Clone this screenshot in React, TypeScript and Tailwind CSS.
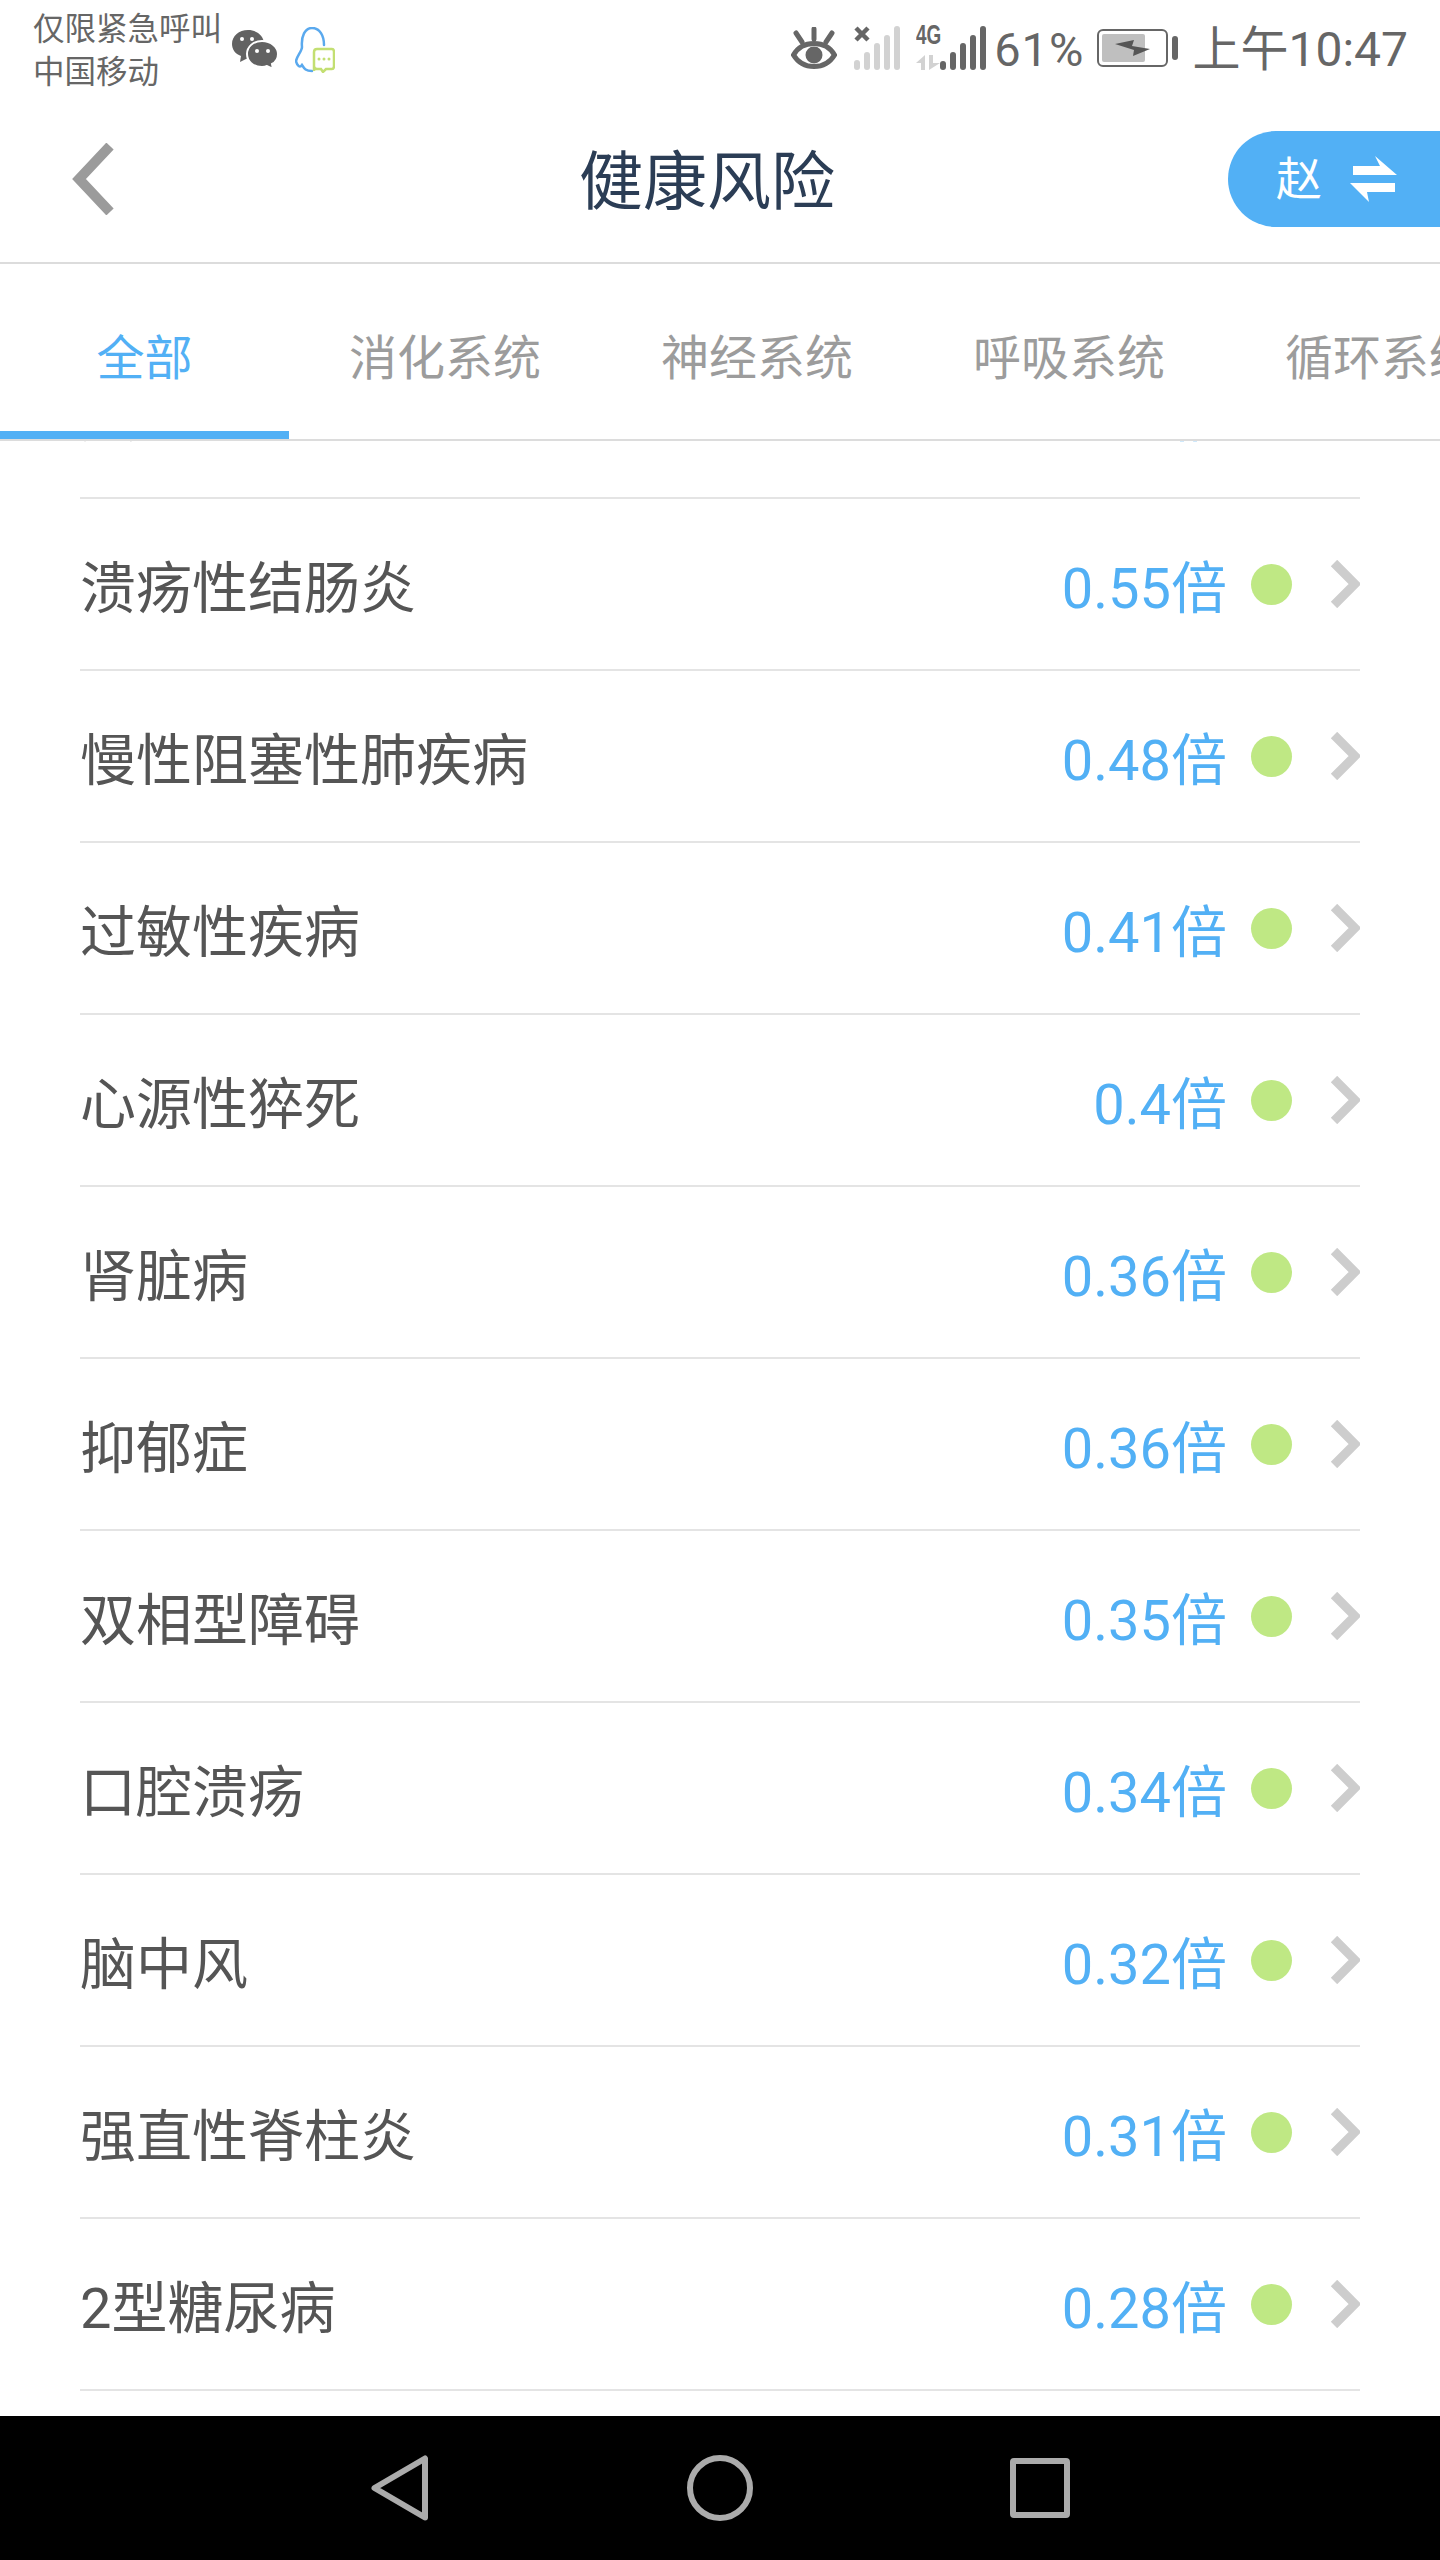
const cjk = "font-['Roboto','Noto_Sans_CJK_SC',sans-serif]";

const risks = [
  { name: '类风湿', value: '0.6倍' },
  { name: '溃疡性结肠炎', value: '0.55倍' },
  { name: '慢性阻塞性肺疾病', value: '0.48倍' },
  { name: '过敏性疾病', value: '0.41倍' },
  { name: '心源性猝死', value: '0.4倍' },
  { name: '肾脏病', value: '0.36倍' },
  { name: '抑郁症', value: '0.36倍' },
  { name: '双相型障碍', value: '0.35倍' },
  { name: '口腔溃疡', value: '0.34倍' },
  { name: '脑中风', value: '0.32倍' },
  { name: '强直性脊柱炎', value: '0.31倍' },
  { name: '2型糖尿病', value: '0.28倍' },
  { name: '帕金森病', value: '0.25倍' },
];

const tabs = ['消化系统', '神经系统', '呼吸系统', '循环系统'];

const StatusIcons = () => (
  <div className="-mt-[4px] flex items-start">
    {/* eye comfort */}
    <svg width="46" height="42" viewBox="0 0 46 42" fill="none" className="mt-[1px] text-[#666666]">
      <path d="M2.5 28C7 20 14 16.5 23 16.5C32 16.5 39 20 43.5 28C39 35.5 32 39.5 23 39.5C14 39.5 7 35.5 2.5 28Z" stroke="currentColor" strokeWidth="5" />
      <circle cx="23" cy="28" r="8.5" fill="currentColor" />
      <path d="M23 2V12M5 6L11 15M41 6L35 15" stroke="currentColor" strokeWidth="5" strokeLinecap="round" />
    </svg>
    {/* sim 1, no service */}
    <svg width="46" height="44" viewBox="0 0 46 44" className="ml-[17px]">
      <path d="M2 2L14 14M14 2L2 14" stroke="#666666" strokeWidth="4.5" />
      <g fill="#d2d2d2">
        <rect x="0" y="34" width="6" height="10" rx="3" />
        <rect x="10" y="26" width="6" height="18" rx="3" />
        <rect x="20" y="17" width="6" height="27" rx="3" />
        <rect x="30" y="9" width="6" height="35" rx="3" />
        <rect x="40" y="0" width="6" height="44" rx="3" />
      </g>
    </svg>
    {/* sim 2, 4G */}
    <div className="relative ml-[16px] h-[44px] w-[70px]">
      <span className="absolute left-0 top-[-6px] origin-left scale-x-[0.7] font-['Liberation_Sans',sans-serif] text-[27px] leading-[31px] font-bold text-[#666666]">4G</span>
      <svg width="70" height="44" viewBox="0 0 70 44" className="absolute inset-0">
        <path d="M0 37L9 29V44H5V37ZM13 29V44L24 37H17V29Z" fill="#d2d2d2" />
        <g fill="#666666">
          <rect x="24" y="35" width="6" height="9" rx="3" />
          <rect x="34" y="26" width="6" height="18" rx="3" />
          <rect x="44" y="17" width="6" height="27" rx="3" />
          <rect x="54" y="9" width="6" height="35" rx="3" />
          <rect x="64" y="0" width="6" height="44" rx="3" />
        </g>
      </svg>
    </div>
  </div>
);

const Battery = () => (
  <svg width="81" height="38" viewBox="0 0 81 38" className="-mt-[4px]">
    <rect x="1" y="1" width="69" height="36" rx="5" fill="none" stroke="#666666" strokeWidth="2" />
    <rect x="5" y="5" width="43" height="28" rx="2" fill="#bfbfbf" />
    <path d="M18 15L37 11L35 17L53 20L36 27L37 21Z" fill="#555555" />
    <rect x="75" y="7" width="6" height="24" rx="3" fill="#666666" />
  </svg>
);

const StatusBar = () => (
  <div className={`flex h-[86px] items-start justify-between pl-[33px] pr-[32px] pt-[8px] text-[#666666] ${cjk}`}>
    <div className="flex items-start">
      <div className="w-[192px] text-[31.5px] leading-[43px]">
        <div>仅限紧急呼叫</div>
        <div>中国移动</div>
      </div>
      {/* wechat */}
      <svg width="46" height="40" viewBox="0 0 46 40" className="ml-[7px] mt-[22px]">
        <path d="M16 0C25 0 32 6 32 14C32 22 25 28 16 28L8 32L9 26C3 24 0 19 0 14C0 6 7 0 16 0Z" fill="#626262" />
        <path d="M30 11C39 11 46 17 46 24C46 28 44 32 40 34L41 39L35 36C33 37 31 37 30 37C21 37 15 31 15 24C15 17 21 11 30 11Z" fill="#626262" stroke="#ffffff" strokeWidth="2" />
        <circle cx="10" cy="9" r="2" fill="#ffffff" />
        <circle cx="20" cy="9" r="2" fill="#ffffff" />
        <circle cx="25" cy="21" r="2" fill="#ffffff" />
        <circle cx="36" cy="21" r="2" fill="#ffffff" />
      </svg>
      {/* qq notification */}
      <svg width="40" height="46" viewBox="0 0 40 46" className="ml-[17px] mt-[19px]" fill="none">
        <path d="M17 44C10 44 9 41 7 38C5 41 2 39 1 34C2 29 7 24 7 20C6 9 10 1 17 1C25 1 29 9 29 18" stroke="#5aa9ee" strokeWidth="2.5" strokeLinecap="round" />
        <path d="M19 44V25C19 23 20 22 22 22H37C38 22 39 23 39 25V39C39 41 38 42 37 42H31L28 45L26 42H22C20 42 19 41 19 39Z" fill="#ffffff" stroke="#c3df72" strokeWidth="2.5" />
        <circle cx="24" cy="32" r="1.5" fill="#c3df72" />
        <circle cx="29" cy="32" r="1.5" fill="#c3df72" />
        <circle cx="34" cy="32" r="1.5" fill="#c3df72" />
      </svg>
    </div>
    <div className="flex items-center pt-[17px]">
      <StatusIcons />
      <span className="ml-[8px] text-[47px] leading-[50px] tracking-[1px]">61%</span>
      <div className="ml-[13px] flex">
        <Battery />
      </div>
      <span className="ml-[14px] text-[48px] leading-[50px] whitespace-nowrap">上午10:47</span>
    </div>
  </div>
);

const Header = () => (
  <div className={`relative flex h-[178px] items-center justify-center border-b-2 border-[#dcdcdc] pr-[26px] pt-[18px] ${cjk}`}>
    <svg width="44" height="72" viewBox="0 0 44 72" className="absolute left-[72px] top-[57px]" fill="none">
      <path d="M38 3L7 36L38 69" stroke="#9b9b9b" strokeWidth="10" />
    </svg>
    <span className="text-[64px] leading-none text-[#2b3d55]">健康风险</span>
    <div className="absolute right-0 top-[45px] flex h-[96px] w-[212px] items-center rounded-l-[48px] bg-[#52b0f5] pl-[48px] text-[46px] text-white">
      <span>赵</span>
      <svg width="48" height="46" viewBox="0 0 48 46" className="ml-[28px]">
        <path d="M3 10H30L25 0L47 19H3ZM45 27V36H17L19 46L0 27Z" fill="#ffffff" />
      </svg>
    </div>
  </div>
);

const TabBar = () => (
  <div className={`relative z-10 flex h-[177px] overflow-hidden border-b-2 border-[#dcdcdc] bg-white text-[48px] ${cjk}`}>
    <div className="flex h-[175px] w-[289px] shrink-0 items-center justify-center border-b-[8px] border-[#52b0f5] pt-[22px] text-[#52b0f5]">全部</div>
    {tabs.map((tab) => (
      <div key={tab} className="flex h-[175px] w-[312px] shrink-0 items-center justify-center pt-[14px] text-[#9c9c9c]">
        {tab}
      </div>
    ))}
  </div>
);

const RiskRow = ({ name, value }: { name: string; value: string }) => (
  <div className="flex h-[172px] items-center justify-between border-b-2 border-[#e4e4e4]">
    <span className="pt-[10px] text-[56px] text-[#555555]">{name}</span>
    <div className="flex items-center">
      <span className="pt-[10px] text-[56px] text-[#52b0f5]">{value}</span>
      <span className="ml-[24px] h-[41px] w-[41px] rounded-full bg-[#bfe884]" />
      <svg width="30" height="48" viewBox="0 0 30 48" className="ml-[38px]" fill="none">
        <path d="M4 3L25 24L4 45" stroke="#cdcdcd" strokeWidth="9" />
      </svg>
    </div>
  </div>
);

const NavBar = () => (
  <div className="flex h-[144px] shrink-0 items-center justify-center bg-black">
    <div className="flex w-[320px] justify-center">
      <svg width="58" height="66" viewBox="0 0 58 66" fill="none">
        <path d="M54 3.5V62.5L3.5 33Z" stroke="#ababab" strokeWidth="6" strokeLinejoin="round" />
      </svg>
    </div>
    <div className="flex w-[320px] justify-center">
      <span className="h-[66px] w-[66px] rounded-full border-[6px] border-[#ababab]" />
    </div>
    <div className="flex w-[320px] justify-center">
      <span className="h-[60px] w-[60px] rounded-[4px] border-[6px] border-[#ababab]" />
    </div>
  </div>
);

export default function App() {
  return (
    <div className="flex h-[2560px] w-[1440px] flex-col overflow-hidden bg-white">
      <StatusBar />
      <Header />
      <TabBar />
      <div className={`min-h-0 flex-1 overflow-hidden px-[80px] ${cjk}`}>
        {/* list is scrolled, first row sits mostly under the tabs */}
        <div className="-mt-[114px]">
          {risks.map((r) => (
            <RiskRow key={r.name} name={r.name} value={r.value} />
          ))}
        </div>
      </div>
      <NavBar />
    </div>
  );
}
